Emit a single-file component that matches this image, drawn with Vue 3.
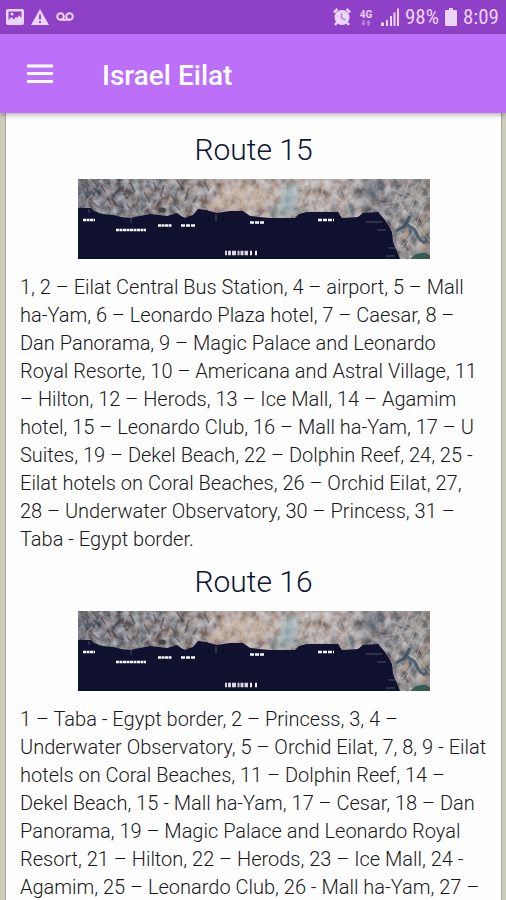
<script setup>
const routes = [
  {
    id: 15,
    stops:
      '1, 2 – Eilat Central Bus Station, 4 – airport, 5 – Mall ha-Yam, 6 – Leonardo Plaza hotel, 7 – Caesar, 8 – Dan Panorama, 9 – Magic Palace and Leonardo Royal Resorte, 10 – Americana and Astral Village, 11 – Hilton, 12 – Herods, 13 – Ice Mall, 14 – Agamim hotel, 15 – Leonardo Club, 16 – Mall ha-Yam, 17 – U Suites, 19 – Dekel Beach, 22 – Dolphin Reef, 24, 25 - Eilat hotels on Coral Beaches, 26 – Orchid Eilat, 27, 28 – Underwater Observatory, 30 – Princess, 31 – Taba - Egypt border.'
  },
  {
    id: 16,
    stops:
      '1 – Taba - Egypt border, 2 – Princess, 3, 4 – Underwater Observatory, 5 – Orchid Eilat, 7, 8, 9 - Eilat hotels on Coral Beaches, 11 – Dolphin Reef, 14 – Dekel Beach, 15 - Mall ha-Yam, 17 – Cesar, 18 – Dan Panorama, 19 – Magic Palace and Leonardo Royal Resort, 21 – Hilton, 22 – Herods, 23 – Ice Mall, 24 - Agamim, 25 – Leonardo Club, 26 - Mall ha-Yam, 27 –'
  }
]
</script>

<template>
  <div class="screen">
    <div class="status-bar">
      <div class="status-group">
        <svg width="18" height="18" viewBox="0 0 18 18">
          <path fill="currentColor" fill-rule="evenodd" d="M2 1h14a2 2 0 0 1 2 2v12a2 2 0 0 1-2 2H2a2 2 0 0 1-2-2V3a2 2 0 0 1 2-2zM2.500 3.500v8.500l3-3 2.500 2.500 2-3 1.500 1.500 1.500-3 2.500 3V3.500z" />
          <circle cx="6" cy="6" r="1.500" fill="currentColor" />
        </svg>
        <svg width="18" height="18" viewBox="0 0 18 18">
          <path fill="currentColor" d="M9 1L18 17H0z" />
          <path stroke="#8e40c6" stroke-width="1.800" d="M9 6.500v5M9 13v2" />
        </svg>
        <svg width="18" height="18" viewBox="0 0 18 18" fill="none" stroke="currentColor" stroke-width="2">
          <circle cx="4.500" cy="8.500" r="3.300" />
          <circle cx="13.500" cy="8.500" r="3.300" />
          <path d="M4.500 11.800h9" />
        </svg>
      </div>
      <div class="status-group right">
        <svg width="18" height="18" viewBox="0 0 18 18">
          <circle cx="9" cy="9.500" r="7.500" fill="currentColor" />
          <path fill="none" stroke="currentColor" stroke-width="2.500" d="M1 4.500L4.500 1M17 4.500L13.500 1M4 14.500L2 17M14 14.500l2 2.500" />
          <path fill="none" stroke="#b184dc" stroke-width="1.500" d="M8.500 5.500v4.500l4 2" />
        </svg>
        <div class="network">
          <span>4G</span>
          <svg width="10" height="6" viewBox="0 0 10 6">
            <path fill="currentColor" opacity="0.450" d="M1.500 0h2v3H5L2.500 6 0 3h1.500zM6.500 6h2V3H10L7.500 0 5 3h1.500z" />
          </svg>
        </div>
        <svg width="18" height="18" viewBox="0 0 18 18" fill="currentColor">
          <path d="M0 14.500h3V18H0zM5 12h2v6H5zM9 8h2v10H9zM12.500 4.500h2V18h-2zM16 0.500h2V18h-2z" />
        </svg>
        <span class="level">98%</span>
        <svg width="12" height="18" viewBox="0 0 12 18" fill="currentColor">
          <path d="M4 0h4v2h3a1 1 0 0 1 1 1v14a1 1 0 0 1-1 1H1a1 1 0 0 1-1-1V3a1 1 0 0 1 1-1h3z" />
        </svg>
        <span class="clock">8:09</span>
      </div>
    </div>

    <header class="toolbar">
      <button class="menu" type="button" aria-label="Open menu">
        <svg width="26" height="20" viewBox="0 0 26 20" fill="currentColor">
          <path d="M0 0.500h26v3H0zM0 8h26v3H0zM0 16h26v3H0z" />
        </svg>
      </button>
      <h1>Israel Eilat</h1>
    </header>

    <main class="content">
      <article class="page">
        <section v-for="route in routes" :key="route.id">
          <h2>Route {{ route.id }}</h2>
          <svg class="map" viewBox="0 0 352 80" role="img" :aria-label="`Map of route ${route.id}`">
            <defs>
              <linearGradient :id="`land${route.id}`">
                <stop offset="0" stop-color="#77767e" />
                <stop offset="0.300" stop-color="#918c8d" />
                <stop offset="0.420" stop-color="#b3a8a3" />
                <stop offset="0.720" stop-color="#b3a9a6" />
                <stop offset="0.850" stop-color="#918e94" />
                <stop offset="1" stop-color="#918f8c" />
              </linearGradient>
              <filter :id="`rock${route.id}`" x="0" y="0" width="1" height="1" color-interpolation-filters="sRGB">
                <feTurbulence type="fractalNoise" baseFrequency="0.130 0.110" numOctaves="4" seed="21" />
                <feColorMatrix values="1.500 0.300 0 0 -0.400  1.500 0.100 0.200 0 -0.400  1.500 0 0.300 0 -0.400  0 0 0 0 1" />
                <feBlend in2="SourceGraphic" mode="soft-light" />
              </filter>
              <filter :id="`haze${route.id}`" x="-0.300" y="-0.300" width="1.600" height="1.600">
                <feGaussianBlur stdDeviation="3" />
              </filter>
            </defs>
            <rect width="352" height="80" :fill="`url(#land${route.id})`" :filter="`url(#rock${route.id})`" />
            <g :filter="`url(#haze${route.id})`">
              <path fill="#d0b7a5" opacity="0.450" d="M125 30L158 5l42 8-15 17z" />
              <path fill="#9bc0c8" opacity="0.600" d="M208 5h12l-4 26h-18z" />
              <path fill="#59636c" opacity="0.400" d="M284 0h20l-6 26h-12z" />
              <path fill="#79969a" opacity="0.400" d="M190 30h42v8h-42z" />
            </g>
            <g fill="none" stroke="#35363c" stroke-width="1.500" opacity="0.500">
              <path d="M4 5l6 5-2 7M22 4l5 9M39 12l-5 8 5 8M52 3l5 10M66 13l6 11M86 6l-4 13M99 1l6 9M111 9l-4 13M126 2l5 10M14 23l7 6M48 25l7 7M14 12l3 5M30 19l3 7M46 8l-2 5M61 20l-3 6M75 3l3 6M79 20l-4 5M93 16l4 6M97 26l5 5M119 17l-4 7" />
            </g>
            <g fill="none" stroke="#b9b6b8" stroke-width="1.500" opacity="0.500">
              <path d="M9 21l5-5M18 9l-4-6M33 5l4 4M27 27l3-5M44 19l6-3M58 16l3-6M70 9l4 5M80 14l3 6M90 24l3-5M104 20l4-6M117 6l4 7M110 28l5-4M65 31l5-3" />
            </g>
            <ellipse cx="84" cy="31" rx="4" ry="2.500" fill="#3f4742" />
            <g fill="none" stroke="#d6d2cf" opacity="0.450">
              <path d="M303 25l49-8M306 36l35 38M318 20l34 42M308 8l34 14M332 0l-11 29M345 0l-12 30M352 36l-29 32M347 25l-22 50" />
              <path d="M174 7l-6 15M184 5l-5 19M235 9l-8 16M246 7l-7 22M258 11l-9 17M270 9l-8 20" />
            </g>
            <path fill="#10112f" d="M0 29h13l3 3 8 3 11 1 8 2 9 1 10-2 10-2 9 1 8 1 10-3 4 3 4 2 8-3 5-6 8 1 11 3 13-2h13l7 5 20 2h25l4-4 8-2h31l4 6 16-1 5-4 15-1 7 8 7 12 1 10 7 17H0z" />
            <path fill="none" stroke="#35516b" stroke-width="3" opacity="0.800" d="M332 37l-4 8 8 5 6 11 5 3M327 47l-9 5" />
            <path fill="#365d52" d="M332 80l6-5 9-1 5 2v4z" />
            <g fill="#b99c80" opacity="0.600">
              <path d="M341 39l5-2 2 5-4 2zM345 50l5-1v5h-4zM340 67l6-2 3 4-7 2zM322 57l3-3 4 4-4 3z" />
            </g>
            <g fill="none" stroke="#f7f7fb" stroke-width="2.500">
              <path stroke-dasharray="3 0.500" d="M5 41h12M38 51h30M80 46.500h14" />
              <path stroke-dasharray="4 1" d="M103 46.500h14M172 43.500h15M240 41h16" />
            </g>
            <path fill="none" stroke="#d6d6e4" stroke-width="4.500" stroke-dasharray="2 1 3 1 4 1.500" d="M147 74h23" />
            <path fill="none" stroke="#ececf4" stroke-width="4.500" stroke-dasharray="2 3" d="M172 74h7" />
            <path fill="none" stroke="#8d91a3" opacity="0.500" d="M11 30v4M53 38v6M138 35v7M288 43h16M299 51h9M310 69h7M308 77h9" />
          </svg>
          <p>{{ route.stops }}</p>
        </section>
      </article>
    </main>
  </div>
</template>

<style>
body {
  margin: 0;
}
</style>

<style scoped>
.screen {
  display: flex;
  flex-direction: column;
  height: 100vh;
  overflow: hidden;
  background: #cccdb9;
  color: #18181a;
  font-family: Roboto, "Liberation Sans", sans-serif;
}

.status-bar {
  display: flex;
  flex: none;
  align-items: center;
  justify-content: space-between;
  height: 34px;
  padding: 0 7px 0 6px;
  background: #8e40c6;
  color: #ebd5fa;
}

.status-group {
  display: flex;
  align-items: center;
  gap: 7px;
}

.right {
  gap: 6px;
}

.network {
  display: flex;
  flex-direction: column;
  align-items: center;
  width: 18px;
  font-size: 10px;
  font-weight: 700;
  line-height: 11px;
}

.level,
.clock {
  font-family: "Roboto Condensed", Roboto, sans-serif;
  font-size: 21px;
  line-height: 34px;
}

.toolbar {
  display: flex;
  flex: none;
  align-items: center;
  gap: 49px;
  height: 79px;
  padding: 0 27px;
  background: #bc6ff8;
  color: #fff;
  box-shadow: 0 2px 5px rgba(0, 0, 0, 0.3);
  z-index: 1;
}

.menu {
  display: flex;
  padding: 0;
  border: 0;
  background: none;
  color: inherit;
  cursor: pointer;
}

h1 {
  margin: 0;
  padding-top: 4px;
  font-size: 28px;
  font-weight: 500;
  line-height: 36px;
}

.content {
  flex: 1;
  min-height: 0;
  overflow-y: auto;
  scrollbar-width: none;
}

.page {
  min-height: 100%;
  box-sizing: border-box;
  margin: 0 4px 0 5px;
  padding: 8px 14px 0;
  border: solid #aaa998;
  border-width: 0 1px;
  background: #fefefe;
}

h2 {
  margin: 0;
  color: #0c1433;
  font-size: 30px;
  font-weight: 300;
  line-height: 58px;
  text-align: center;
}

.map {
  display: block;
  width: 100%;
  max-width: 352px;
  margin: 0 auto 14px;
}

p {
  margin: 0;
  font-size: 20px;
  font-weight: 300;
  line-height: 28px;
}
</style>
